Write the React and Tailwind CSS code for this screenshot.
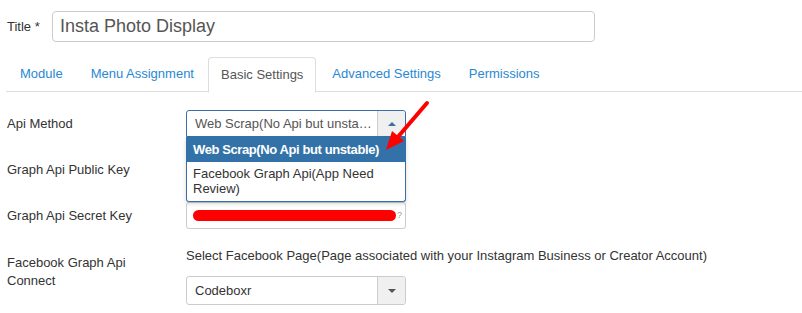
import React from 'react'

const tabs = ['Module', 'Menu Assignment', 'Basic Settings', 'Advanced Settings', 'Permissions']

function SelectArrow({ up = false }) {
    return (
        <div className="w-[28px] self-stretch flex items-center justify-center bg-[#f0f0f0] border-l border-[#ccc] rounded-r-[3px]">
            {up ? (
                <div className="w-0 h-0 border-l-[4px] border-r-[4px] border-b-[4px] border-l-transparent border-r-transparent border-b-[#3a6fa6]" />
            ) : (
                <div className="w-0 h-0 border-l-[4px] border-r-[4px] border-t-[4px] border-l-transparent border-r-transparent border-t-[#555]" />
            )}
        </div>
    )
}

export default function App() {
    return (
        <div className="relative w-[802px] h-[313px] bg-white overflow-hidden text-[13px] text-[#333]" style={{ fontFamily: '"Liberation Sans", Arial, sans-serif' }}>
            {/* Title */}
            <div className="flex items-center pl-[7px] pt-[11px]">
                <span className="w-[45px] text-[13px] text-[#333]">Title *</span>
                <div className="w-[543px] h-[31px] border border-[#ccc] rounded-[4px] flex items-center px-[7px] text-[18px] text-[#555]">
                    Insta Photo Display
                </div>
            </div>

            {/* Tabs */}
            <ul className="flex ml-[6px] mt-[15px] h-[35px] border-b border-[#ddd]">
                {tabs.map((t) => {
                    const active = t === 'Basic Settings'
                    return (
                        <li
                            key={t}
                            className={`flex items-center text-[13px] ${active
                                ? 'bg-white border border-[#ddd] border-b-white rounded-t-[4px] text-[#555] -mb-px h-[36px] px-[12px] mr-[2px]'
                                : 'px-[14px] text-[#2a88d3]'
                                }`}
                        >
                            {t}
                        </li>
                    )
                })}
            </ul>

            {/* Form */}
            <div className="pl-[7px] pt-[18px]">
                <div className="flex items-center h-[27px]">
                    <span className="w-[179px]">Api Method</span>
                    <div className="w-[220px] h-[27px] flex items-center border border-[#3a6fa6] rounded-t-[3px] bg-white">
                        <span className="flex-1 pl-[8px] text-[#555] truncate">Web Scrap(No Api but unsta…</span>
                        <SelectArrow up />
                    </div>
                </div>
                <div className="flex items-center h-[27px] mt-[19px]">
                    <span className="w-[179px]">Graph Api Public Key</span>
                    <div className="w-[220px] h-[27px] border border-[#ccc] rounded-[3px]" />
                </div>
                <div className="flex items-center h-[27px] mt-[19px]">
                    <span className="w-[179px]">Graph Api Secret Key</span>
                    <div className="w-[220px] h-[27px] border border-[#ccc] rounded-[3px] flex items-center pl-[6px]">
                        <div className="w-[203px] h-[11px] rounded-full bg-[#ff0000]" />
                        <span className="ml-[1px] text-[9px] leading-none text-[#999]">?</span>
                    </div>
                </div>
                <div className="flex mt-[18px]">
                    <span className="w-[179px] pt-[7px] leading-[18px]">Facebook Graph Api<br />Connect</span>
                    <div className="flex flex-col">
                        <span className="leading-[18px]">Select Facebook Page(Page associated with your Instagram Business or Creator Account)</span>
                        <div className="mt-[11px] w-[220px] h-[29px] flex items-center border border-[#ccc] rounded-[3px] bg-white">
                            <span className="flex-1 pl-[8px] text-[#333]">Codeboxr</span>
                            <SelectArrow />
                        </div>
                    </div>
                </div>
            </div>

            {/* Open dropdown */}
            <div className="absolute left-[186px] top-[137px] w-[220px] bg-white border border-[#3a6fa6] border-t-0 rounded-b-[3px] shadow-[0_2px_4px_rgba(0,0,0,0.15)]">
                <div className="h-[25px] flex items-center px-[6px] bg-[#3272a8] text-white font-bold tracking-[-0.4px]">
                    Web Scrap(No Api but unstable)
                </div>
                <div className="px-[6px] pt-[4px] pb-[5px] leading-[15px] text-[#333]">
                    Facebook Graph Api(App Need Review)
                </div>
            </div>

            {/* Red arrow annotation */}
            <svg className="absolute left-[380px] top-[98px]" width="56" height="60" viewBox="0 0 56 60">
                <line x1="47" y1="5" x2="17" y2="40" stroke="#f00" strokeWidth="4" strokeLinecap="round" />
                <polygon points="6,52 12,33 24,43" fill="#f00" />
            </svg>
        </div>
    )
}
